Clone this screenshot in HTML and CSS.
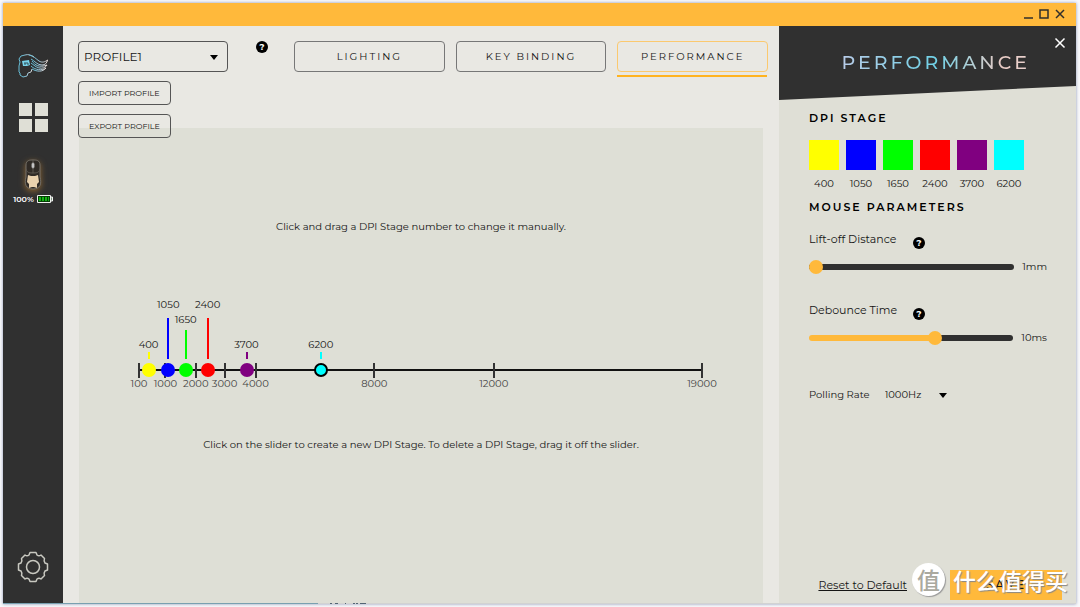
FILE: index.html
```html
<!DOCTYPE html>
<html lang="en">
<head>
<meta charset="utf-8">
<title>Performance</title>
<link rel="stylesheet" href="styles.css">
</head>
<body>
<div class="window">
  <header class="titlebar">
    <button class="win-btn" aria-label="Minimize"><svg width="10" height="10" viewBox="0 0 10 10"><path d="M1 9h9"/></svg></button>
    <button class="win-btn" aria-label="Maximize"><svg width="10" height="10" viewBox="0 0 10 10"><path d="M1 1h8v8H1z"/></svg></button>
    <button class="win-btn" aria-label="Close window"><svg width="10" height="10" viewBox="0 0 10 10"><path d="M1 1l8 8M9 1L1 9"/></svg></button>
  </header>
  <div class="body">
    <nav class="sidebar">
      <a class="logo" href="#" aria-label="Home">
        <svg width="30" height="24" viewBox="0 0 30 24" fill="none" stroke-width="1">
          <defs><linearGradient id="lg" x1="0" x2="1"><stop offset="0.2" stop-color="#67bdd6"/><stop offset="0.6" stop-color="#a5c5d6"/><stop offset="1" stop-color="#ecdcd6"/></linearGradient></defs>
          <g stroke="url(#lg)">
            <path d="M16 3C13 1 10 0 7 1L3 2L1 5L2 8L1 12V18L2 19V21L5 23L9 22L10 19L13 18L14 15"/>
            <path d="M11 1C16 2 18 5 21 7C24 9 27 8 29.500 6C29 9 27 11 24 11C19 11 17 7 13 5"/>
            <path d="M14 7C17 11 21 14 29 11C27 15 21 15 17 12L13 9"/>
            <path d="M13 12C17 16 24 17 28 14C25 18 19 18 14 15"/>
          </g>
          <path d="M4 7L11 6L12 11L9 12H5Z" fill="#78d3ea"/>
          <path d="M6 9h4v2M7 9v2" stroke="#30515b"/>
        </svg>
      </a>
      <a class="grid-icon" href="#" aria-label="Devices"><i></i><i></i><i></i><i></i></a>
      <a class="device" href="#" aria-label="Mouse">
        <svg class="mouse" width="22" height="36" viewBox="0 0 22 36" fill="none">
          <path d="M4 7C4 2 8 2 11 2C14 2 18 2 18 7V19C20 26 18 31 11 31C4 31 2 26 4 19Z" fill="#302b26" stroke="#75716a"/>
          <path d="M11 2V15M4 11C5 15 8 15 11 15C14 15 17 15 18 11" stroke="#5d5850"/>
          <rect x="10" y="5" width="2" height="5" rx="1" fill="#ddd" stroke="#aaa"/>
          <path d="M6 17L9 18H13L16 17L17 24L15 26V30L12 29H10L7 30V26L5 24Z" fill="#ead2ae"/>
        </svg>
        <span class="battery">100%
          <svg width="16" height="8" viewBox="0 0 16 8"><path d="M.5.5h13v7H.5zM14 2h1.500v4H14z" fill="#063f06" stroke="#f2f2f2"/><path d="M2 2h2v4H2zM5 2h2v4H5zM8 2h2v4H8zM11 2h1v4h-1z" fill="#13b713"/></svg>
        </span>
      </a>
      <a class="settings" href="#" aria-label="Settings">
        <svg width="32" height="32" viewBox="0 0 32 32" fill="none" stroke="#c8c8c0" stroke-width="1.500" stroke-linejoin="round">
          <path d="M13 1.500h6l1 2.500q2 1.500 4 0l3.500 3.500q-1 2.500.500 4.500l2.500 1v6l-2.500 1q-1.500 2-.500 4.500L24 28q-2-1.500-4 0l-1 2.500h-6L12 28q-2-1.500-4 0l-3.500-3.500q1-2.500-.500-4.500l-2.500-1v-6L4 12q1.500-2 .500-4.500L8 4q2 1.500 4 0z"/>
          <circle cx="16" cy="16" r="6.500"/>
        </svg>
      </a>
    </nav>

    <main class="main">
      <div class="toolbar">
        <div class="profile">
          <div class="select-box">
            <select class="profile-select" aria-label="Profile"><option>PROFILE1</option></select>
            <svg class="caret" width="8" height="5" viewBox="0 0 8 5"><path d="M0 0h8L4 5z"/></svg>
          </div>
          <button class="small-btn">IMPORT PROFILE</button>
          <button class="small-btn">EXPORT PROFILE</button>
        </div>
        <button class="help" aria-label="Profile help">?</button>
        <div class="tabs">
          <button class="tab">LIGHTING</button>
          <button class="tab">KEY BINDING</button>
          <button class="tab active">PERFORMANCE</button>
        </div>
      </div>
      <section class="canvas">
        <p class="hint">Click and drag a DPI Stage number to change it manually.</p>
        <div class="chart">
          <div class="axis"></div>
          <div class="tick" style="left:0%"><span>100</span></div>
          <div class="tick" style="left:4.7%"><span>1000</span></div>
          <div class="tick" style="left:10.1%"><span>2000</span></div>
          <div class="tick" style="left:15.2%"><span>3000</span></div>
          <div class="tick" style="left:20.7%"><span>4000</span></div>
          <div class="tick" style="left:41.8%"><span>8000</span></div>
          <div class="tick" style="left:63%"><span>12000</span></div>
          <div class="tick" style="left:100%"><span>19000</span></div>
          <button class="stage short yellow" style="left:1.7%">400<i></i><b></b></button>
          <button class="stage tall blue" style="left:5.2%">1050<i></i><b></b></button>
          <button class="stage mid green" style="left:8.3%">1650<i></i><b></b></button>
          <button class="stage tall red" style="left:12.2%">2400<i></i><b></b></button>
          <button class="stage short purple" style="left:19.1%">3700<i></i><b></b></button>
          <button class="stage short cyan selected" style="left:32.3%">6200<i></i><b></b></button>
        </div>
        <p class="hint">Click on the slider to create a new DPI Stage. To delete a DPI Stage, drag it off the slider.</p>
      </section>
    </main>

    <aside class="panel">
      <div class="panel-head">
        <h1>PERFORMANCE</h1>
        <button class="close" aria-label="Close panel"><svg width="12" height="12" viewBox="0 0 12 12"><path d="M1.500 1.500l9 9M10.500 1.500l-9 9"/></svg></button>
      </div>
      <div class="panel-body">
        <h2>DPI STAGE</h2>
        <div class="swatches">
          <button class="swatch yellow"><i></i>400</button>
          <button class="swatch blue"><i></i>1050</button>
          <button class="swatch green"><i></i>1650</button>
          <button class="swatch red"><i></i>2400</button>
          <button class="swatch purple"><i></i>3700</button>
          <button class="swatch cyan"><i></i>6200</button>
        </div>
        <h2>MOUSE PARAMETERS</h2>
        <div class="param">
          <div class="param-name"><label for="lift">Lift-off Distance</label><button class="help" aria-label="Lift-off help">?</button></div>
          <div class="slider"><input id="lift" type="range" min="1" max="3" value="1" style="--fill:0%"><output for="lift">1mm</output></div>
        </div>
        <div class="param">
          <div class="param-name"><label for="debounce">Debounce Time</label><button class="help" aria-label="Debounce help">?</button></div>
          <div class="slider"><input id="debounce" type="range" min="0" max="16" value="10" style="--fill:62%"><output for="debounce">10ms</output></div>
        </div>
        <div class="polling">
          <label for="rate">Polling Rate</label>
          <div class="select-box">
            <select id="rate" class="rate-select"><option>1000Hz</option></select>
            <svg class="caret" width="8" height="5" viewBox="0 0 8 5"><path d="M0 0h8L4 5z"/></svg>
          </div>
        </div>
        <div class="actions">
          <a class="reset" href="#">Reset to Default</a>
          <button class="save">SAVE</button>
          <div class="watermark"><span class="badge">值</span><span>什么值得买</span></div>
        </div>
      </div>
    </aside>
  </div>
  <div class="edge"><svg width="40" height="1" viewBox="0 0 40 1"><path d="M2 0h2v1H2zM7 0h3v1H7zM17 0h1v1h-1zM25 0h2v1h-2zM28 0h2v1h-2zM32 0h6v1h-6z" fill="#536574"/></svg></div>
</div>
</body>
</html>
```
FILE: styles.css
```css
* { box-sizing: border-box; }
body {
  margin: 0;
  height: 100vh;
  padding: 3px 4px 3px 3px;
  background: #f8f8fa;
  color: #151515;
  font: 10px/16px Montserrat, Inter, "Noto Sans CJK SC", sans-serif;
}
button, select { font: inherit; color: inherit; background: none; border: 0; padding: 0; margin: 0; }
h1, h2, p { margin: 0; }
a { color: inherit; text-decoration: none; }

.window { height: 100%; display: flex; flex-direction: column; box-shadow: 0 0 3px #8a94b4; }
.titlebar { height: 23px; flex: none; background: #ffb93b; display: flex; justify-content: flex-end; align-items: center; gap: 6px; padding: 0 11px 2px 0; }
.win-btn { display: flex; }
.win-btn svg { fill: none; stroke: #302f2b; stroke-width: 1.5; }
.body { flex: 1; min-height: 0; display: flex; }
.edge { height: 1px; display: flex; padding-left: 325px; background: linear-gradient(90deg, #79a0b0 315px, #d2d2d2 315px); }

.sidebar { width: 60px; flex: none; background: #303030; display: flex; flex-direction: column; align-items: center; padding: 28px 0 20px; }
.logo { display: flex; }
.grid-icon { display: grid; grid-template-columns: 13px 13px; gap: 3px; margin-top: 25px; }
.grid-icon i { height: 13px; background: #dfdfd6; }
.device { display: flex; flex-direction: column; align-items: center; margin-top: 26px; }
.mouse { filter: drop-shadow(0 2px 3px #8a6330); }
.battery { display: flex; align-items: center; gap: 3px; color: #fff; font-size: 8px; line-height: 10px; font-weight: 600; }
.settings { display: flex; margin-top: auto; }

.main { flex: 1; min-width: 0; background: #e9e8e3; display: flex; flex-direction: column; padding: 15px 11px 0 15px; }
.toolbar { display: flex; align-items: flex-start; position: relative; z-index: 1; }
.profile { width: 150px; display: flex; flex-direction: column; align-items: flex-start; gap: 9px; }
.select-box { position: relative; }
.caret { position: absolute; right: 10px; top: 50%; margin-top: -2px; pointer-events: none; }
.profile .select-box { width: 100%; }
select { appearance: none; }
.profile-select { width: 100%; height: 31px; border: 1px solid #555; border-radius: 4px; padding: 0 5px; font-size: 12px; }
.small-btn { height: 24px; padding: 0 10px; border: 1px solid #555; border-radius: 4px; font-size: 8px; white-space: nowrap; }
.help { width: 12px; height: 12px; border-radius: 50%; background: #000; color: #fff; font-size: 9px; line-height: 12px; font-weight: 700; text-align: center; }
.toolbar .help { margin: 0 26px 0 28px; }
.tabs { flex: 1; display: grid; grid-template-columns: repeat(3, 1fr); gap: 11px; }
.tab { height: 31px; border: 1px solid #777; border-radius: 4px; letter-spacing: 2px; position: relative; }
.tab.active { border-color: #fbc96f; }
.tab.active::after { content: ""; position: absolute; left: -1px; right: 0; bottom: -6px; height: 2px; background: #ffb320; }

.canvas { flex: 1; margin: -10px 5px 0 1px; background: #dedfd6; padding-top: 91px; }
.hint { text-align: center; }
.chart { position: relative; height: 202px; margin: 0 61px 0 60px; line-height: 14px; }
.axis { position: absolute; left: 0; right: 0; top: 134px; height: 2px; background: #111; }
.tick { position: absolute; top: 128px; width: 2px; height: 15px; margin-left: -1px; background: #333; display: flex; justify-content: center; }
.tick span { padding-top: 14px; color: #444; }
.stage { position: absolute; bottom: 60px; width: 40px; margin-left: -20px; display: flex; flex-direction: column; align-items: center; line-height: 14px; }
.stage i { width: 2px; margin-bottom: 4px; background: var(--c); }
.stage b { width: 14px; height: 14px; border-radius: 50%; background: var(--c); }
.stage.selected b { border: 2px solid #000; }
.short i { height: 7px; }
.mid i { height: 29px; margin-top: 3px; }
.tall i { height: 41px; margin-top: 6px; }
.yellow { --c: #ff0; }
.blue { --c: #00f; }
.green { --c: #0f0; }
.red { --c: #f00; }
.purple { --c: #800080; }
.cyan { --c: #0ff; }

.panel { width: 297px; flex: none; background: #dfdfd6; display: flex; flex-direction: column; }
.panel-head { height: 74px; background: #303030; clip-path: polygon(0 0, 100% 0, 100% 60px, 0 100%); display: flex; justify-content: flex-end; padding: 11px 10px 0 0; }
h1 { font-size: 19px; line-height: 24px; font-weight: 500; letter-spacing: 3px; margin: 14px 24px 0 0; height: 24px; color: transparent; background: linear-gradient(90deg, #b9cce8, #70d1e6 50%, #e9cbc5 85%, #e9d2ce); background-clip: text; }
.close { height: 12px; display: flex; }
.close svg { fill: none; stroke: #fff; stroke-width: 1.5; }
.panel-body { flex: 1; display: flex; flex-direction: column; padding: 10px 14px 3px 30px; }
h2 { font-size: 11px; line-height: 16px; font-weight: 600; letter-spacing: 2px; color: #000; }
.swatches { display: flex; gap: 7px; margin: 14px 0 8px; }
.swatch { width: 30px; display: flex; flex-direction: column; align-items: center; gap: 7px; line-height: 14px; }
.swatch i { width: 100%; height: 30px; background: var(--c); }
.param { margin-top: 16px; }
.param + .param { margin-top: 27px; }
.param-name { display: flex; font-size: 11px; }
.param-name label { width: 104px; }
.param-name .help { margin-top: 6px; }
.slider { display: flex; align-items: center; gap: 8px; width: 238px; margin-top: 10px; height: 16px; }
.slider input { appearance: none; flex: 1; min-width: 0; height: 6px; margin: 0; border-radius: 3px; background: linear-gradient(90deg, #ffb93b var(--fill), #303030 var(--fill)); }
.slider input::-webkit-slider-thumb { appearance: none; width: 14px; height: 14px; border-radius: 50%; background: #ffb93b; }
.polling { display: flex; gap: 15px; margin-top: 41px; }
.rate-select { width: 62px; height: 16px; display: block; }
.polling .caret { right: 0; }
.actions { margin-top: auto; display: flex; justify-content: flex-end; align-items: center; gap: 43px; position: relative; }
.reset { text-decoration: underline; font-size: 11px; }
.save { width: 112px; height: 30px; background: #ffb93b; letter-spacing: 2px; font-size: 12px; font-weight: 500; }
.watermark { position: absolute; right: -6px; bottom: 4px; display: flex; align-items: center; gap: 8px; color: #fff; font: 500 23px/32px "Noto Sans CJK SC", sans-serif; text-shadow: 1px 1px 1px #888; pointer-events: none; }
.badge { width: 33px; height: 33px; border-radius: 50%; background: #fff; color: #aaa99f; text-align: center; text-shadow: none; box-shadow: 1px 1px 1px #999; }
```
